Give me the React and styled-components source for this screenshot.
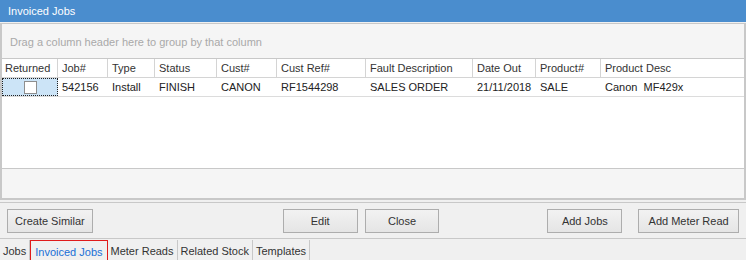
import React from "react";
import styled, { createGlobalStyle } from "styled-components";

const Global = createGlobalStyle`
  html, body { margin: 0; padding: 0; background: #ffffff; }
  body { font-family: Tahoma, "Liberation Sans", Arial, sans-serif; font-size: 11px; color: #333; }
  * { box-sizing: border-box; }
`;

const Window = styled.div`
  width: 746px;
  height: 260px;
  display: flex;
  flex-direction: column;
  background: #f0f0f0;
  overflow: hidden;
`;

const TitleBar = styled.div`
  height: 22px;
  background: #4a8dce;
  color: #ffffff;
  font-size: 11px;
  display: flex;
  align-items: center;
  padding-left: 8px;
  flex: none;
`;

const GridFrame = styled.div`
  margin-top: 1px;
  height: 177px;
  flex: none;
  display: flex;
  flex-direction: column;
  border: 2px solid #c8c8c8;
  border-top-width: 1px;
  background: #ffffff;
`;

const GroupPanel = styled.div`
  height: 35px;
  flex: none;
  background: #f5f5f5;
  border-bottom: 1px solid #c8c8c8;
  color: #a9a9a9;
  font-size: 11px;
  display: flex;
  align-items: center;
  padding-left: 8px;
  padding-top: 2px;
`;

const cols = "56px 50px 47px 62px 60px 89px 107px 63px 65px 1fr";

const HeaderRow = styled.div`
  display: grid;
  grid-template-columns: ${cols};
  height: 19px;
  flex: none;
  border-bottom: 1px solid #d4d4d4;
`;

const HeaderCell = styled.div`
  border-right: 1px solid #d4d4d4;
  padding-left: 4px;
  display: flex;
  align-items: center;
  font-size: 11px;
  color: #333;
  white-space: nowrap;
  overflow: hidden;
  &:first-child { padding-left: 3px; }
  &:last-child { border-right: none; }
`;

const DataRow = styled.div`
  display: grid;
  grid-template-columns: ${cols};
  height: 19px;
  flex: none;
  border-bottom: 1px solid #dcdcdc;
`;

const Cell = styled.div`
  padding-left: 4px;
  display: flex;
  align-items: center;
  font-size: 11px;
  color: #222;
  white-space: pre;
  overflow: hidden;
`;

const CheckCell = styled.div`
  background: #cce4f7;
  border: 1px dotted #222;
  display: flex;
  align-items: center;
  justify-content: center;
`;

const CheckBox = styled.div`
  width: 13px;
  height: 13px;
  background: #ffffff;
  border: 1px solid #8e8e8e;
`;

const EmptyArea = styled.div`
  flex: 1;
  background: #ffffff;
`;

const Footer = styled.div`
  height: 30px;
  flex: none;
  background: #f5f5f5;
  border-top: 1px solid #c8c8c8;
`;

const ButtonBar = styled.div`
  height: 36px;
  flex: none;
  border-top: 1px solid #c8c8c8;
  margin-top: 2px;
  display: flex;
  align-items: center;
  padding: 0 7px;
  gap: 7px;
`;

const Button = styled.button`
  height: 24px;
  width: ${(p) => p.$w}px;
  margin-left: ${(p) => p.$ml || 0}px;
  border: 1px solid #adadad;
  background: linear-gradient(#f2f2f2, #e5e5e5);
  font-family: inherit;
  font-size: 11px;
  color: #333;
  padding: 0;
`;

const TabStrip = styled.div`
  flex: 1;
  display: flex;
  border-top: 1px solid #c8c8c8;
  background: #f0f0f0;
  padding-top: 1px;
`;

const Tab = styled.div`
  height: 21px;
  display: flex;
  align-items: center;
  padding: 0 ${(p) => (p.$active ? 4 : 3)}px;
  font-size: 11px;
  color: ${(p) => (p.$active ? "#1a6fd6" : "#333")};
  border: ${(p) => (p.$active ? "1px solid #e01b1b" : "none")};
  border-right: 1px solid ${(p) => (p.$active ? "#e01b1b" : "#c8c8c8")};
  padding-top: ${(p) => (p.$active ? 2 : 0)}px;
  white-space: nowrap;
`;

const headers = ["Returned", "Job#", "Type", "Status", "Cust#", "Cust Ref#", "Fault Description", "Date Out", "Product#", "Product Desc"];
const row = ["542156", "Install", "FINISH", "CANON", "RF1544298", "SALES ORDER", "21/11/2018", "SALE", "Canon  MF429x"];
const tabs = ["Jobs", "Invoiced Jobs", "Meter Reads", "Related Stock", "Templates"];

export default function App() {
  return (
    <>
      <Global />
      <Window>
        <TitleBar>Invoiced Jobs</TitleBar>
        <GridFrame>
          <GroupPanel>Drag a column header here to group by that column</GroupPanel>
          <HeaderRow>
            {headers.map((h) => (
              <HeaderCell key={h}>{h}</HeaderCell>
            ))}
          </HeaderRow>
          <DataRow>
            <CheckCell>
              <CheckBox />
            </CheckCell>
            {row.map((c, i) => (
              <Cell key={i}>{c}</Cell>
            ))}
          </DataRow>
          <EmptyArea />
          <Footer />
        </GridFrame>
        <ButtonBar>
          <Button $w={86}>Create Similar</Button>
          <Button $w={75} $ml={183}>Edit</Button>
          <Button $w={75}>Close</Button>
          <Button $w={75} $ml={101}>Add Jobs</Button>
          <Button $w={101} $ml={9}>Add Meter Read</Button>
        </ButtonBar>
        <TabStrip>
          {tabs.map((t) => (
            <Tab key={t} $active={t === "Invoiced Jobs"}>{t}</Tab>
          ))}
        </TabStrip>
      </Window>
    </>
  );
}
